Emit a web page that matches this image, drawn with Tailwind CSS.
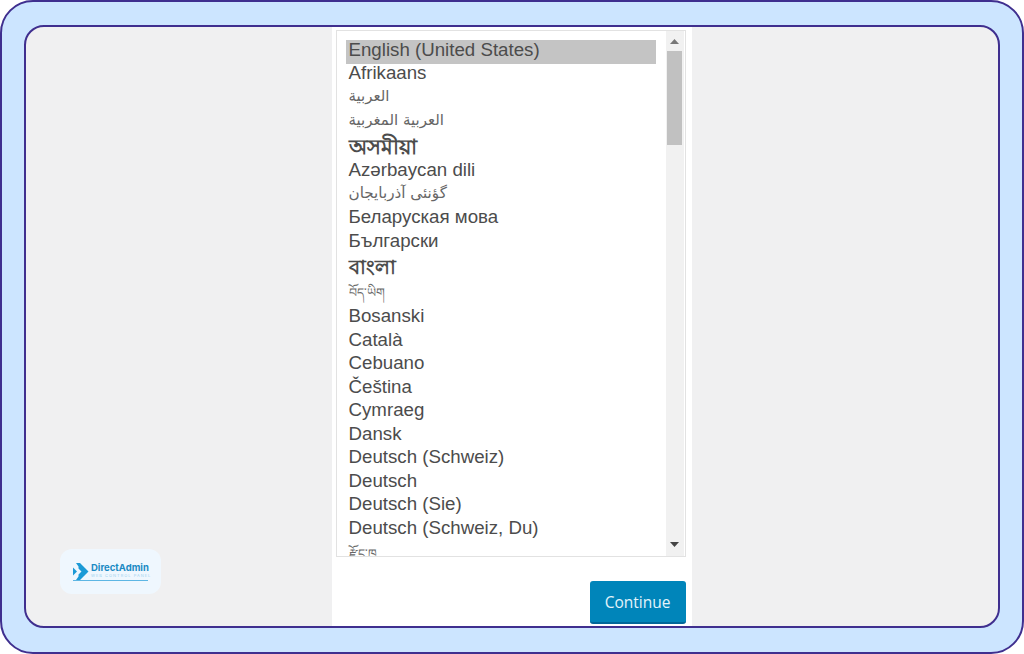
<!DOCTYPE html>
<html lang="en">
<head>
<meta charset="utf-8">
<script src="https://cdn.jsdelivr.net/npm/@tailwindcss/browser@4"></script>
</head>
<body class="bg-white">
<div class="relative box-border w-[1024px] h-[654px] overflow-hidden rounded-[33px] border-2 border-[#3f2f8f] bg-[#cce5ff] pt-[23px] pr-[22px] pb-[24px] pl-[22px]">
  <div class="box-border flex h-full w-full justify-center rounded-[20px] border-2 border-[#3f2f8f] bg-[#f0f0f1]">
    <div class="ml-[-1px] box-border flex h-full w-[360px] flex-col bg-white pt-[3px] pr-[6px] pl-[4px] font-['Liberation_Sans',sans-serif] text-[18.7px] text-[#4c4c4c]">
      <div class="box-border flex h-[527px] w-[350px] shrink-0 border border-[#e2e2e2] pl-[9px] pt-[9px]">
        <div class="flex h-[516px] w-[310px] shrink-0 flex-col overflow-hidden">
          <div class="flex h-[24px] shrink-0 items-center bg-[#c4c4c4] pb-[3px] pl-[3px]">English (United States)</div>
          <div class="flex h-[23.5px] shrink-0 items-center pb-[5px] pl-[3px]">Afrikaans</div>
          <div dir="rtl" class="flex h-[23.5px] shrink-0 items-center justify-end pb-[6px] pl-[3px] font-['DejaVu_Sans',sans-serif] text-[15px] text-[#666]">العربية</div>
          <div dir="rtl" class="flex h-[24px] shrink-0 items-center justify-end pb-[6px] pl-[3px] font-['DejaVu_Sans',sans-serif] text-[15px] text-[#666]">العربية المغربية</div>
          <div class="flex h-[26px] shrink-0 items-center pb-[3px] pl-[3px] text-[21px] font-semibold">অসমীয়া</div>
          <div class="flex h-[24px] shrink-0 items-center pb-[5px] pl-[3px]">Azərbaycan dili</div>
          <div dir="rtl" class="flex h-[23px] shrink-0 items-center justify-end pb-[6px] pl-[3px] font-['DejaVu_Sans',sans-serif] text-[15.2px] text-[#666]">گؤنئی آذربایجان</div>
          <div class="flex h-[24px] shrink-0 items-center pb-[6px] pl-[3px]">Беларуская мова</div>
          <div class="flex h-[24px] shrink-0 items-center pb-[6px] pl-[3px]">Български</div>
          <div class="flex h-[27px] shrink-0 items-center pb-[4px] pl-[3px] text-[19.500px] font-semibold">বাংলা</div>
          <div class="flex h-[24px] shrink-0 items-center pb-[4px] pl-[3px] text-[12.500px] text-[#666]">བོད་ཡིག</div>
          <div class="flex h-[23.5px] shrink-0 items-center pb-[5px] pl-[3px]">Bosanski</div>
          <div class="flex h-[23.5px] shrink-0 items-center pb-[5px] pl-[3px]">Català</div>
          <div class="flex h-[23.5px] shrink-0 items-center pb-[5px] pl-[3px]">Cebuano</div>
          <div class="flex h-[23.5px] shrink-0 items-center pb-[5px] pl-[3px]">Čeština</div>
          <div class="flex h-[23.5px] shrink-0 items-center pb-[5px] pl-[3px]">Cymraeg</div>
          <div class="flex h-[23.5px] shrink-0 items-center pb-[5px] pl-[3px]">Dansk</div>
          <div class="flex h-[23.5px] shrink-0 items-center pb-[5px] pl-[3px]">Deutsch (Schweiz)</div>
          <div class="flex h-[23.5px] shrink-0 items-center pb-[5px] pl-[3px]">Deutsch</div>
          <div class="flex h-[23.5px] shrink-0 items-center pb-[5px] pl-[3px]">Deutsch (Sie)</div>
          <div class="flex h-[23.5px] shrink-0 items-center pb-[5px] pl-[3px]">Deutsch (Schweiz, Du)</div>
          <div class="flex h-[24px] shrink-0 items-center pl-[3px] text-[12.500px] text-[#666]">རྫོང་ཁ</div>
        </div>
        <div class="ml-[10px] mt-[-9px] flex h-[525px] w-[18px] flex-col items-center bg-[#f1f1f1]">
          <svg class="mt-[8px] shrink-0" width="9" height="5" viewBox="0 0 9 5"><path d="M4.5 0 9 5H0z" fill="#777"/></svg>
          <div class="mt-[7px] h-[94px] w-[15px] shrink-0 bg-[#c1c1c1]"></div>
          <svg class="mt-auto mb-[9px] shrink-0" width="9" height="5" viewBox="0 0 9 5"><path d="M0 0h9L4.500 5z" fill="#444"/></svg>
        </div>
      </div>
      <div class="mt-[24px] flex justify-end">
        <button class="h-[43px] w-[96px] rounded-[3px] border-b-2 border-[#006799] bg-[#0085ba] pt-[2px] font-['Open_Sans',sans-serif] text-[15.500px] text-[#e4f4fb]">Continue</button>
      </div>
    </div>
  </div>
  <div class="absolute left-[58px] top-[547px] flex h-[45px] w-[101px] rounded-[12px] bg-[#eff7fe] pt-[14px] pl-[13px]">
    <svg width="16" height="17" viewBox="0 0 16 17" class="shrink-0"><path d="M0 4.500 4 8.500 0 12.500Z" fill="#1b9ad6"/><path d="M3 0H7L15.500 8.500 7 17H3L5.500 13.500 5.500 11.500 8.500 8.500 5.500 5.500 5.500 3.500Z" fill="#1b9ad6"/></svg>
    <div class="ml-[2px] flex flex-col font-['Inter',sans-serif]">
      <span class="mt-[-1px] text-[9.500px] leading-[11px] font-bold whitespace-nowrap text-[#1b8ac4]">DirectAdmin</span>
      <span class="text-[4px] leading-[5px] tracking-[1px] whitespace-nowrap text-[#a3d4ee]">WEB CONTROL PANEL</span>
    </div>
    <div class="absolute left-[13px] top-[31px] h-px w-[75px] bg-[#5db6e4]"></div>
  </div>
</div>
</body>
</html>
